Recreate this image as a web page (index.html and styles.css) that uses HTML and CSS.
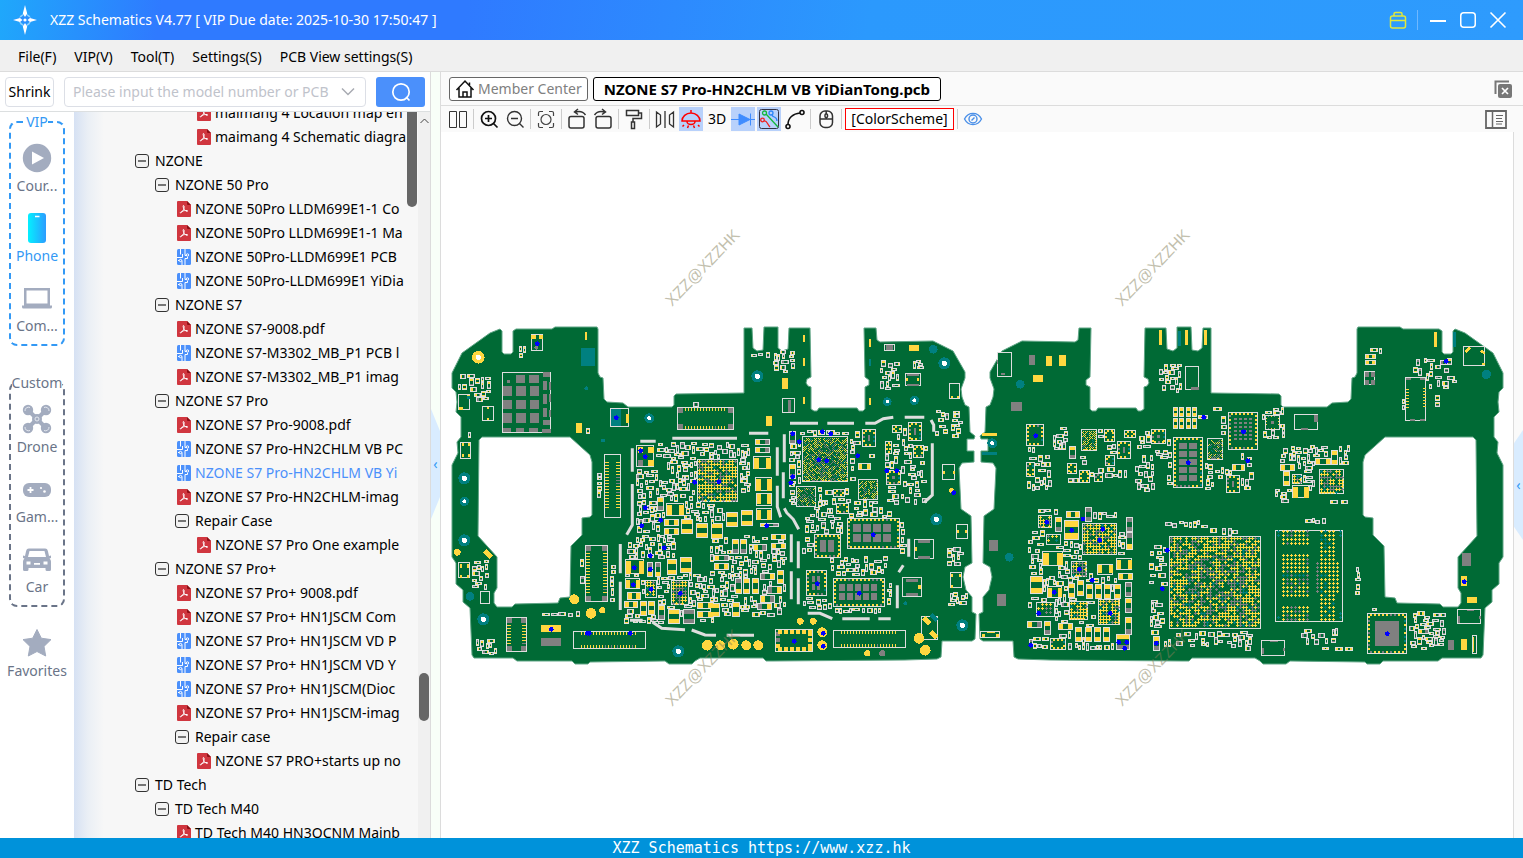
FILE: index.html
```html
<!DOCTYPE html>
<html lang="en">
<head>
    <meta charset="UTF-8">
    <meta name="viewport" content="width=device-width, initial-scale=1.0">
    <title>XZZ Schematics V4.77</title>
    <link rel="stylesheet" href="styles.css">
</head>
<body>
    <svg class="defs" aria-hidden="true">
        <symbol id="i-minus" viewBox="0 0 14 14"><rect x="0.5" y="0.5" width="13" height="13" rx="2.5" fill="#f2f2f2" stroke="#333"/><path d="M3 7h8" stroke="#222" stroke-width="1.2"/></symbol>
        <symbol id="i-pdf" viewBox="0 0 14 16"><path d="M1 0h9l4 4v11a1 1 0 0 1-1 1H1a1 1 0 0 1-1-1V1a1 1 0 0 1 1-1z" fill="#d0363f"/><path d="M10 0l4 4h-3a1 1 0 0 1-1-1z" fill="#8c1016"/><path d="M6.5 4.500c1 0 .6 2.500.1 3.800C5.900 10 4.600 11.800 3.500 12c-1-.6 2.500-2.800 6.500-2.500 1.500.4.300 1.400-.8.700C8 9.500 6.800 8 6.300 6.300 6.100 5.300 6 4.600 6.500 4.500z" fill="none" stroke="#fff"/></symbol>
        <symbol id="i-pcb" viewBox="0 0 14 16"><rect width="14" height="16" rx="1.500" fill="#4b90fb"/><path d="M3.500 0v5.500M0 8.500h5.500V5M8 16V9.500h2.500V8M5 16v-4.500H1M8 0v6.500h2.500" fill="none" stroke="#fff"/><g fill="#4b90fb" stroke="#fff"><circle cx="10.500" cy="6" r="1.200"/><circle cx="3.500" cy="11.500" r="1.200"/></g></symbol>
    </svg>

    <header class="titlebar">
        <svg class="logo" viewBox="0 0 28 32"><circle cx="14" cy="16" r="5.500" fill="none" stroke="#8fd0ff" stroke-width="1.500"/><path d="M14 1l1.800 11.500L27 16l-11.200 2.500L14 31l-1.800-12.500L1 16l11.200-3.500z" fill="#2a8fff"/><path d="M14 1l2.200 8.500L14 13l-2.200-3.500zM14 31l2.200-8.500L14 19l-2.200 3.500zM2 16l7-2 2.500 2L9 18zM26 16l-7-2-2.500 2 2.500 2z" fill="#fff"/><circle cx="14" cy="16" r="1.600" fill="#fff"/></svg>
        <h1>XZZ Schematics V4.77 [ VIP Due date: 2025-10-30 17:50:47 ]</h1>
        <div class="window-buttons">
            <button aria-label="Toolbox"><svg width="18" height="18" fill="none" stroke="#e1e83c" stroke-width="1.500"><rect x="1.500" y="5" width="15" height="12" rx="2"/><path d="M5 5V3a1.500 1.500 0 0 1 1.500-1.500h5A1.500 1.500 0 0 1 13 3v2M1.500 9.500h15M5.500 9.500h7"/></svg></button>
            <span class="divider"></span>
            <button aria-label="Minimize"><svg width="18" height="18" stroke="#fff" stroke-width="2"><path d="M1 10h16"/></svg></button>
            <button aria-label="Maximize"><svg width="18" height="18" fill="none" stroke="#fff" stroke-width="1.500"><rect x="1.750" y="1.750" width="14.500" height="14.500" rx="3"/></svg></button>
            <button aria-label="Close"><svg width="18" height="18" stroke="#fff" stroke-width="1.600"><path d="M1.500 1.500l15 15M16.500 1.500l-15 15"/></svg></button>
        </div>
    </header>

    <nav class="menubar">
        <button>File(F)</button>
        <button>VIP(V)</button>
        <button>Tool(T)</button>
        <button>Settings(S)</button>
        <button>PCB View settings(S)</button>
    </nav>

    <main class="main">
        <aside class="left">
            <form class="search">
                <button type="button" class="shrink">Shrink</button>
                <div class="search-box">
                    <input type="text" aria-label="Model number or PCB" placeholder="Please input the model number or PCB">
                    <svg width="14" height="10" fill="none" stroke="#a8abb2" stroke-width="1.500"><path d="M1 1.500l6 6 6-6"/></svg>
                </div>
                <button type="button" class="search-button" aria-label="Search"><svg width="20" height="20" fill="none" stroke="#fff" stroke-width="1.700"><circle cx="10" cy="10" r="8.200"/><path d="M15 15l3.500 3.500"/></svg></button>
            </form>
            <div class="left-body">
                <nav class="side">
                    <fieldset class="group vip">
                        <legend>VIP</legend>
                        <button class="side-item"><svg viewBox="0 0 32 32"><circle cx="16" cy="16" r="14.200"/><path d="M11 9.500l12 6.500-12 6.500z" fill="#fff"/></svg>Cour...</button>
                        <button class="side-item active"><svg viewBox="0 0 32 32"><defs><linearGradient id="ph"><stop offset="0" stop-color="#04f0ff"/><stop offset="1" stop-color="#2c9cff"/></linearGradient></defs><rect x="7" y="1" width="18" height="30" rx="3" fill="url(#ph)"/><path d="M14 4.500h4.500" stroke="#fff" stroke-width="1.500"/></svg>Phone</button>
                        <button class="side-item"><svg viewBox="0 0 32 32"><path d="M3 6h26v18H3zM5.500 8.500v13h21v-13z" fill-rule="evenodd"/><path d="M1 23.500h30V25a1.500 1.500 0 0 1-1.500 1.500h-27A1.500 1.500 0 0 1 1 25z"/></svg>Com...</button>
                    </fieldset>
                    <fieldset class="group custom">
                        <legend>Custom</legend>
                        <button class="side-item"><svg viewBox="0 0 32 32"><path d="M7 7l18 18M25 7L7 25" stroke="#a3acbf" stroke-width="4"/><circle cx="16" cy="16" r="5"/><circle cx="7" cy="7" r="5.200"/><circle cx="25" cy="7" r="5.200"/><circle cx="7" cy="25" r="5.200"/><circle cx="25" cy="25" r="5.200"/><g fill="none" stroke="#e4e8f0"><path d="M4 8a3.500 3.500 0 0 1 5-3.500M28 8a3.500 3.500 0 0 0-5-3.500M4 24a3.500 3.500 0 0 0 5 3.500M28 24a3.500 3.500 0 0 1-5 3.500"/><circle cx="16" cy="16" r="2"/></g></svg>Drone</button>
                        <button class="side-item"><svg viewBox="0 0 32 32"><rect x="2" y="10" width="28" height="14" rx="6"/><path d="M6.500 17h6M9.500 14v6" stroke="#fff" stroke-width="1.800"/><circle cx="20" cy="15" r="1.100" fill="#fff"/><circle cx="23.500" cy="18.500" r="1.300" fill="#fff"/></svg>Gam...</button>
                        <button class="side-item"><svg viewBox="0 0 32 32"><path d="M8 5.500h16c2 0 2.500 1 3 3l1 4.500 2-.5v2.500l-1.500.5c1 .8 1.500 2 1.500 3.500v7.500a1.500 1.500 0 0 1-1.500 1.500H26a1.500 1.500 0 0 1-1.500-1.500V25h-17v1.500A1.500 1.500 0 0 1 6 28H3.500A1.500 1.500 0 0 1 2 26.500V19c0-1.500.5-2.700 1.500-3.500L2 15v-2.500l2 .5 1-4.500c.5-2 1-3 3-3z"/><path d="M8.500 8h15L25 14H7zM5.500 18.500h4v3h-4zM13 20h6v1.800h-6zM22.500 18.500h4v3h-4z" fill="#fff"/></svg>Car</button>
                    </fieldset>
                    <button class="side-item favorites"><svg viewBox="0 0 32 32"><path d="M16 2.500l4.300 8.700 9.700 1.400-7 6.800 1.700 9.600-8.700-4.500L7.300 29 9 19.400l-7-6.800 9.700-1.400z" stroke="#a3acbf" stroke-linejoin="round"/></svg>Favorites</button>
                </nav>
                <ul class="tree">
                    <li class="file l3"><svg><use href="#i-pdf"/></svg>maimang 4 Location map en</li>
                    <li class="file l3"><svg><use href="#i-pdf"/></svg>maimang 4 Schematic diagra</li>
                    <li class="folder l0"><svg><use href="#i-minus"/></svg>NZONE</li>
                    <li class="folder l1"><svg><use href="#i-minus"/></svg>NZONE 50 Pro</li>
                    <li class="file l2"><svg><use href="#i-pdf"/></svg>NZONE 50Pro LLDM699E1-1 Co</li>
                    <li class="file l2"><svg><use href="#i-pdf"/></svg>NZONE 50Pro LLDM699E1-1 Ma</li>
                    <li class="file l2"><svg><use href="#i-pcb"/></svg>NZONE 50Pro-LLDM699E1 PCB</li>
                    <li class="file l2"><svg><use href="#i-pcb"/></svg>NZONE 50Pro-LLDM699E1 YiDia</li>
                    <li class="folder l1"><svg><use href="#i-minus"/></svg>NZONE S7</li>
                    <li class="file l2"><svg><use href="#i-pdf"/></svg>NZONE S7-9008.pdf</li>
                    <li class="file l2"><svg><use href="#i-pcb"/></svg>NZONE S7-M3302_MB_P1 PCB l</li>
                    <li class="file l2"><svg><use href="#i-pdf"/></svg>NZONE S7-M3302_MB_P1 imag</li>
                    <li class="folder l1"><svg><use href="#i-minus"/></svg>NZONE S7 Pro</li>
                    <li class="file l2"><svg><use href="#i-pdf"/></svg>NZONE S7 Pro-9008.pdf</li>
                    <li class="file l2"><svg><use href="#i-pcb"/></svg>NZONE S7 Pro-HN2CHLM VB PC</li>
                    <li class="file l2 selected"><svg><use href="#i-pcb"/></svg>NZONE S7 Pro-HN2CHLM VB Yi</li>
                    <li class="file l2"><svg><use href="#i-pdf"/></svg>NZONE S7 Pro-HN2CHLM-imag</li>
                    <li class="folder l2"><svg><use href="#i-minus"/></svg>Repair Case</li>
                    <li class="file l3"><svg><use href="#i-pdf"/></svg>NZONE S7 Pro One example</li>
                    <li class="folder l1"><svg><use href="#i-minus"/></svg>NZONE S7 Pro+</li>
                    <li class="file l2"><svg><use href="#i-pdf"/></svg>NZONE S7 Pro+ 9008.pdf</li>
                    <li class="file l2"><svg><use href="#i-pdf"/></svg>NZONE S7 Pro+ HN1JSCM Com</li>
                    <li class="file l2"><svg><use href="#i-pcb"/></svg>NZONE S7 Pro+ HN1JSCM VD P</li>
                    <li class="file l2"><svg><use href="#i-pcb"/></svg>NZONE S7 Pro+ HN1JSCM VD Y</li>
                    <li class="file l2"><svg><use href="#i-pcb"/></svg>NZONE S7 Pro+ HN1JSCM(Dioc</li>
                    <li class="file l2"><svg><use href="#i-pdf"/></svg>NZONE S7 Pro+ HN1JSCM-imag</li>
                    <li class="folder l2"><svg><use href="#i-minus"/></svg>Repair case</li>
                    <li class="file l3"><svg><use href="#i-pdf"/></svg>NZONE S7 PRO+starts up no</li>
                    <li class="folder l0"><svg><use href="#i-minus"/></svg>TD Tech</li>
                    <li class="folder l1"><svg><use href="#i-minus"/></svg>TD Tech M40</li>
                    <li class="file l2"><svg><use href="#i-pdf"/></svg>TD Tech M40 HN3OCNM Mainb</li>
                </ul>
                <div class="scroll inner"><span class="thumb"></span></div>
                <div class="scroll outer"><svg width="9" height="6" fill="none" stroke="#444"><path d="M0.500 5l4-4 4 4"/></svg><span class="thumb"></span></div>
            </div>
        </aside>

        <div class="splitter"><button class="notch" aria-label="Collapse list">&lsaquo;</button></div>

        <section class="viewer">
            <div class="tabs">
                <button class="tab"><svg width="20" height="20" fill="none" stroke="#111" stroke-width="1.500"><path d="M1.500 11L10 2l8.500 9M4 9v9h12V9M8 18v-5h4v5M14.500 3.500v2.500"/></svg>Member Center</button>
                <button class="tab current">NZONE S7 Pro-HN2CHLM VB YiDianTong.pcb</button>
                <button class="close-all" aria-label="Close all tabs"><svg width="20" height="20"><path d="M2.500 15V2.500H16" fill="none" stroke="#777" stroke-width="2"/><rect x="5" y="5" width="14" height="14" rx="2" fill="#777"/><path d="M9 9l6 6M15 9l-6 6" stroke="#fff" stroke-width="1.700"/></svg></button>
            </div>
            <div class="toolbar">
                <button aria-label="Split view"><svg viewBox="0 0 24 24" stroke="#333"><path d="M3.500 4.500h7v16h-7zM13.500 4.500h7v16h-7z"/></svg></button>
                <span class="sep"></span>
                <button aria-label="Zoom in"><svg viewBox="0 0 24 24" stroke="#111" stroke-width="1.700"><circle cx="11.500" cy="11.500" r="7"/><path d="M16.500 16.500l4 4M8 11.500h7M11.500 8v7"/></svg></button>
                <button aria-label="Zoom out"><svg viewBox="0 0 24 24" stroke="#333" stroke-width="1.400"><circle cx="11.500" cy="11.500" r="7"/><path d="M16.500 16.500l4 4M8 11.500h7"/></svg></button>
                <span class="sep"></span>
                <button aria-label="Fit"><svg viewBox="0 0 24 24" stroke="#444" stroke-width="1.200"><circle cx="12" cy="12.500" r="5"/><path d="M4.500 9V6a1.500 1.500 0 0 1 1.500-1.500h3M15 4.500h3A1.500 1.500 0 0 1 19.500 6v3M19.500 16v3a1.500 1.500 0 0 1-1.500 1.500h-3M9 20.500H6A1.500 1.500 0 0 1 4.500 19v-3"/></svg></button>
                <span class="sep"></span>
                <button aria-label="Rotate left"><svg viewBox="0 0 24 24" stroke="#333" stroke-width="1.500"><rect x="4" y="9.500" width="15" height="11.500" rx="2"/><path d="M20.500 8c-2-3-6-4-10-3M13 2l-3.500 3L13 7.500"/></svg></button>
                <button aria-label="Rotate right"><svg viewBox="0 0 24 24" stroke="#333" stroke-width="1.500"><rect x="5" y="9.500" width="15" height="11.500" rx="2"/><path d="M3.500 8c2-3 6-4 10-3M11 2l3.500 3L11 7.500"/></svg></button>
                <span class="sep"></span>
                <button aria-label="Paint"><svg viewBox="0 0 24 24" stroke="#333" stroke-width="1.500"><path d="M4.500 3.500h12v5h-12zM16.500 6h3v5.500H11V15M9.500 15h3v6.500h-3z"/></svg></button>
                <span class="sep"></span>
                <button aria-label="Mirror"><svg viewBox="0 0 24 24" stroke="#333" stroke-width="1.300"><path d="M12 4v17M3.500 5v15l4-3V8zM20.500 5v15l-4-3V8z"/></svg></button>
                <button class="on" aria-label="Lamp"><svg viewBox="0 0 24 24" stroke="#f00" stroke-width="1.500"><path d="M12 3v3M3 14a9 8 0 0 1 18 0zM8 14.500a4 3 0 0 0 8 0M5 18l-1.500 1.500M19 18l1.500 1.500M9.500 18.500l-1 2.500M14.500 18.500l1 2.500"/></svg></button>
                <button>3D</button>
                <button class="on" aria-label="Diode"><svg viewBox="0 0 24 24" stroke="#3f8cff"><path d="M0 12.500h24M19.500 6.500v12"/><path d="M8 7l11 5.500L8 18z" fill="#3f8cff"/></svg></button>
                <button class="on" aria-label="Nets"><svg viewBox="0 0 24 24"><rect x="2.500" y="2.500" width="19" height="19" rx="2" stroke="#334"/><g stroke-width="1.300"><path d="M9 7l12 13" stroke="#12b83c"/><circle cx="7.500" cy="6" r="2" stroke="#12b83c"/><path d="M15 8c1 3 5 1 5 6" stroke="#2d86f8"/><circle cx="14" cy="6" r="2" stroke="#2d86f8"/><path d="M7 14c3-1 3 3 6 6" stroke="#f02020"/><circle cx="5.500" cy="13" r="1.800" stroke="#f02020"/></g></svg></button>
                <button aria-label="Trace"><svg viewBox="0 0 24 24" stroke="#111" stroke-width="1.600"><circle cx="5" cy="19.500" r="2"/><circle cx="19" cy="5.500" r="2"/><path d="M5 17.500C5 11 10 6.500 17 6"/></svg></button>
                <span class="sep"></span>
                <button aria-label="Mouse"><svg viewBox="0 0 24 24" stroke="#333" stroke-width="1.500"><rect x="6" y="4" width="12.500" height="16.500" rx="5"/><path d="M6 12h12.500M12.200 4v3M12.200 10.500V12"/><rect x="11" y="7" width="2.500" height="3.500" rx="1"/></svg></button>
                <span class="sep"></span>
                <button class="scheme">[ColorScheme]</button>
                <span class="sep"></span>
                <button aria-label="Show"><svg viewBox="0 0 24 24" stroke="#4b90e8" stroke-width="1.400"><path d="M3.500 12c4-7.500 13-7.500 17 0-4 7.500-13 7.500-17 0z"/><circle cx="12" cy="12" r="4"/><path d="M10.500 13.500l3-3"/></svg></button>
                <button class="panel-button" aria-label="Side panel"><svg viewBox="0 0 24 24" stroke="#666"><path d="M2 4h20v17H2z" stroke-width="1.800"/><path d="M8.500 4v17" stroke-width="1.500"/><path d="M12 8.500h7M12 11.500h6M12 14.500h7M12 17h6"/></svg></button>
            </div>
            <div class="stage">
                <svg class="board" id="board" viewBox="441 132 1072 706"></svg>
                <div class="edge"><button class="notch" aria-label="Open panel">&lsaquo;</button></div>
            </div>
        </section>
    </main>

    <footer class="statusbar">XZZ Schematics https://www.xzz.hk</footer>
    <script src="board.js"></script>
</body>
</html>
```

FILE: styles.css
```css
* { box-sizing: border-box; }
body { margin: 0; height: 100vh; display: flex; flex-direction: column; overflow: hidden; font-family: "Noto Sans", "Open Sans", sans-serif; font-size: 14px; line-height: 20px; color: #000; background: #fff; }
button { font: inherit; color: inherit; background: none; border: none; padding: 0; margin: 0; cursor: pointer; }
svg { display: block; flex: none; }
.defs { position: absolute; width: 0; height: 0; }

.titlebar { display: flex; align-items: center; height: 40px; flex: none; padding: 0 16px 0 11px; color: #fff; background: linear-gradient(100deg, #1fa8fb 0, #2f7aff 160px, #2f7aff 460px, #2b99fd 860px, #2e9bfd 100%); }
.titlebar h1 { flex: 1; margin: 0 0 0 11px; font-size: 14px; font-weight: 400; white-space: nowrap; }
.logo { width: 28px; height: 32px; }
.window-buttons { display: flex; align-items: center; gap: 12px; }
.window-buttons .divider { width: 1px; height: 20px; margin-right: -1px; margin-left: -2px; background: #6fb8ff; }

.menubar { display: flex; gap: 18px; height: 32px; flex: none; padding: 2px 18px 0; background: #f0f0f0; border-bottom: 1px solid #dcdcdc; }

.main { flex: 1; display: flex; min-height: 0; }
.left { width: 431px; flex: none; display: flex; flex-direction: column; border-right: 1px solid #dcdcdc; }
.search { display: flex; gap: 10px; height: 40px; flex: none; padding: 5px; border-bottom: 1px solid #dcdfe0; }
.search .shrink { width: 49px; height: 30px; border: 1px solid #dcdfe6; border-radius: 4px; }
.search-box { flex: 1; display: flex; align-items: center; height: 30px; padding: 0 10px 0 8px; gap: 8px; border: 1px solid #dcdfe6; border-radius: 4px; }
.search-box input { flex: 1; min-width: 0; border: none; outline: none; padding: 0; font: inherit; background: none; }
.search-box input::placeholder { color: #bfc3cb; }
.search-button { display: flex; align-items: center; justify-content: center; width: 49px; height: 30px; background: #4b90fb; border-radius: 3px; }

.left-body { flex: 1; display: flex; min-height: 0; }
.side { width: 74px; flex: none; display: flex; flex-direction: column; background: #fff; color: #6a7488; }
.group { min-width: 0; margin: 0 9px 27px; padding: 2px 0 0; border: 2px dashed #6a7488; border-radius: 8px; }
.group legend { margin: 0 auto; padding: 0; line-height: 20px; }
.group.vip { border-color: #3399f5; }
.group.vip legend { color: #3399f5; }
.group.custom { margin-bottom: 12px; }
.side-item { display: flex; flex-direction: column; align-items: center; gap: 2px; width: 100%; height: 70px; padding: 8px 0; white-space: nowrap; }
.side-item svg { width: 32px; height: 32px; fill: #a3acbf; }
.side-item.active { color: #3399f5; }

.tree { flex: 1; min-width: 0; overflow: hidden; margin: 0; padding: 0; list-style: none; display: flex; flex-direction: column; background: linear-gradient(90deg, #d6e1f3 0, #eaeff5 14px, #f7f7f7 30px, #f7f7f7 100%); }
.tree li { display: flex; align-items: center; height: 24px; flex: none; overflow: hidden; white-space: nowrap; }
.tree li:first-child { margin-top: -11px; }
.folder svg { width: 14px; height: 14px; margin-right: 6px; }
.file svg { width: 14px; height: 16px; margin: 0 4px 0 2px; }
.l0 { padding-left: 61px; }
.l1 { padding-left: 81px; }
.l2 { padding-left: 101px; }
.l3 { padding-left: 121px; }
.tree .selected { color: #4b90fb; }
.scroll { flex: none; display: flex; flex-direction: column; align-items: center; }
.scroll .thumb { width: 10px; background: #666; border-radius: 5px; }
.scroll.inner { width: 12px; background: #f7f7f7; }
.scroll.inner .thumb { height: 95px; border-radius: 0 0 5px 5px; }
.scroll.outer { width: 12px; padding: 6px 0 117px; justify-content: space-between; background: #f0f0f0; }
.scroll.outer .thumb { height: 48px; }

.splitter { width: 10px; flex: none; display: flex; align-items: center; padding-top: 18px; background: #f8fff8; border-right: 1px solid #dcdcdc; }
.notch { width: 10px; height: 110px; color: #3399f5; background: #d9ecff; clip-path: polygon(0 0, 100% 20%, 100% 80%, 0 100%); }

.viewer { flex: 1; min-width: 0; display: flex; flex-direction: column; }
.tabs { display: flex; align-items: center; gap: 5px; height: 34px; flex: none; padding: 0 10px 0 8px; background: #fafafa; border-bottom: 1px solid #dcdcdc; }
.tab { display: flex; align-items: center; gap: 3px; height: 24px; padding: 0 5px; color: #808080; border: 1px solid #666; border-radius: 3px; background: #fff; white-space: nowrap; }
.tab.current { padding: 0 10px; color: #000; font-size: 15px; font-weight: 700; border-color: #000; }
.close-all { margin-left: auto; }
.toolbar { display: flex; align-items: center; gap: 2px; height: 26px; flex: none; padding: 0 5px; background: #fafafa; }
.toolbar button { width: 24px; height: 24px; }
.toolbar svg { width: 24px; height: 24px; fill: none; }
.toolbar .on { background: #b8d1fb; }
.toolbar .sep { width: 1px; height: 20px; margin: 0 1px; background: #ccc; }
.toolbar .scheme { width: 109px; height: 22px; border: 1px solid #f00; background: #fff; }
.toolbar .panel-button { margin-left: auto; margin-right: 10px; }

.stage { flex: 1; min-height: 0; display: flex; }
.board { flex: 1; min-width: 0; height: 100%; }
.watermark { font-family: "Liberation Sans", sans-serif; font-size: 16px; fill: #857f5c; fill-opacity: 0.5; }
.edge { width: 10px; flex: none; display: flex; align-items: center; background: #fafafa; border-left: 1px solid #dcdcdc; }
.edge .notch { clip-path: polygon(0 12%, 100% 0, 100% 100%, 0 88%); }

.statusbar { height: 20px; flex: none; text-align: center; color: #fff; background: #0092da; font-family: "DejaVu Sans Mono", monospace; font-size: 15px; }
```

FILE: board.js
```js
// Board viewer: outline in view units, parts in 1/3 units per section.
const OUTLINE = '502,331 502,352 504,354 511,354 513,352 513,331 516,329 552,329 555,327 597,327 598,329 598,373 600,377 603,378 604,399 607,402 623,403 628,407 672,407 674,405 674,396 676,394 744,393 744,328 752,328 753,348 757,351 763,350 764,327 778,327 778,348 782,351 788,349 789,328 810,328 811,377 807,379 806,383 808,386 811,387 811,409 814,411 817,411 819,408 857,408 859,411 863,411 865,409 865,387 869,385 869,380 865,377 864,328 876,328 877,340 880,342 933,341 953,351 965,372 965,378 961,389 962,397 965,405 969,407 970,432 975,436 974,439 967,439 967,451 974,451 974,462 962,463 959,468 961,509 971,516 972,563 965,567 963,577 966,590 972,597 972,612 976,614 975,639 972,641 942,641 941,657 937,659 905,660 773,661 766,661 763,658 700,658 695,661 692,664 669,664 665,661 590,662 588,664 575,664 572,661 517,661 513,658 474,658 472,655 470,608 463,602 463,590 456,584 456,563 452,557 452,465 458,453 457,442 461,437 461,417 456,412 457,402 456,392 452,388 452,373 462,353 490,333 500,329';
const HOLE = '479,440 482,437 570,437 590,455 592,462 592,515 590,517 582,518 582,535 571,546 570,597 560,598 558,603 515,604 512,607 497,607 494,603 494,593 497,588 497,557 478,536';

const ORDER = ['#dedede', '#006a35', '#808080', '#ffd740', '#008080', '#0000ff', '#ffffff'];
const [LINE, GREEN, GRAY, GOLD, TEAL, BLUE, WHITE] = ORDER;
const paint = {};
ORDER.forEach(c => paint[c] = '');
let lines = '';
let taken = [];
let ox = 0;

let seed = 77;
function rnd() {
    seed = (seed + 0x6D2B79F5) | 0;
    let t = Math.imul(seed ^ (seed >>> 15), 1 | seed);
    t = (t + Math.imul(t ^ (t >>> 7), 61 | t)) ^ t;
    return ((t ^ (t >>> 14)) >>> 0) / 4294967296;
}
function u(v) { return Math.round(v / 3); }
function px(c, x, y, w, h) { paint[c] += `M${x} ${y}h${w}v${h}h${-w}z`; }
function rect(c, x, y, w, h) { px(c, 445 + u(ox + x), 310 + u(y), Math.max(1, u(w)), Math.max(1, u(h))); }
function dot(c, x, y, r) {
    const X = 445 + (ox + x) / 3, Y = 310 + y / 3, R = r / 3;
    paint[c] += `M${X - R} ${Y}a${R} ${R} 0 1 1 ${2 * R} 0a${R} ${R} 0 1 1 ${-2 * R} 0z`;
}
function frame(x, y, w, h) {
    px(LINE, x, y, w, h);
    px(GREEN, x + 1, y + 1, w - 2, h - 2);
}
function box(x, y, w, h) {
    const X = 445 + u(ox + x), Y = 310 + u(y);
    frame(X, Y, u(w), u(h));
    taken.push([X, Y, u(w), u(h)]);
    return [X, Y, u(w), u(h)];
}
// two-terminal part with end pads
function chip(x, y, w, h, c) {
    const [X, Y, W, H] = box(x, y, w, h);
    const a = c || (rnd() < .75 ? GOLD : GRAY), b = c || (rnd() < .6 ? GOLD : GRAY);
    if (W >= H) {
        const p = Math.floor(W * .3);
        px(a, X + 1, Y + 1, p, H - 2); px(b, X + W - 1 - p, Y + 1, p, H - 2);
    } else {
        const p = Math.floor(H * .3);
        px(a, X + 1, Y + 1, W - 2, p); px(b, X + 1, Y + H - 1 - p, W - 2, p);
    }
}
// wide inductors have their pads left and right
function coil(x, y, w, h) { box(x, y, w, h); rect(GOLD, x + 3, y + 4, w * .27, h - 8); rect(GOLD, x + w * .7, y + 4, w * .27, h - 8); }
// package with edge pads and an optional thermal grid
function ic(x, y, w, h, cols, rows, pad) {
    const [X, Y, W, H] = box(x, y, w, h);
    const s = pad || 2;
    for (let i = 3; i < W - 3; i += s + 2) { px(rnd() < .8 ? GOLD : GRAY, X + i, Y + 1, s, s); px(rnd() < .8 ? GOLD : GRAY, X + i, Y + H - 1 - s, s, s); }
    for (let i = 3; i < H - 3; i += s + 2) { px(rnd() < .8 ? GOLD : GRAY, X + 1, Y + i, s, s); px(rnd() < .8 ? GOLD : TEAL, X + W - 1 - s, Y + i, s, s); }
    if (!cols) return;
    const cw = Math.floor((W - 10) / cols), ch = Math.floor((H - 10) / rows);
    for (let i = 0; i < cols; i++) for (let j = 0; j < rows; j++) px(GRAY, X + 6 + i * cw, Y + 6 + j * ch, Math.max(2, cw - 2), Math.max(2, ch - 2));
}
function connector(x, y, w, h, corner) {
    const [X, Y, W, H] = box(x, y, w, h);
    const k = corner ? 5 : 0;
    if (k) [[1, 1], [W - 6, 1], [1, H - 6], [W - 6, H - 6]].forEach(p => px(GRAY, X + p[0], Y + p[1], 5, 5));
    if (W > H) for (let i = 8; i < W - 8; i += 3) { px(GOLD, X + i, Y + 1, 1, 3); px(rnd() < .8 ? GOLD : GRAY, X + i, Y + H - 4, 1, 3); }
    else for (let i = 8; i < H - 8; i += 3) { px(GOLD, X + 1, Y + i, 4, 1); px(rnd() < .7 ? GOLD : GRAY, X + W - 5, Y + i, 4, 1); }
}
function ball(c, x, y) { px(c, x - 1, y, 3, 1); px(c, x, y - 1, 1, 3); }
// step 2 is a checkerboard of single pads, larger steps are crosses
function bga(x, y, w, h, step, gray, fill) {
    const [X, Y, W, H] = box(x, y, w, h);
    for (let j = 2; j < H - 1; j += step) for (let i = 2; i < W - 1; i += step) {
        if (rnd() > (fill || .92)) continue;
        const mid = Math.hypot((i - W / 2) / W, (j - H / 2) / H) < .33;
        const t = rnd();
        const c = t < (mid ? gray * 2 : gray) ? GRAY : t > .95 ? TEAL : GOLD;
        if (step === 2) { px(c, X + i, Y + j, 1, 1); px(c, X + i + (rnd() < .5 ? 1 : -1), Y + j + 1 < Y + H - 1 ? Y + j + 1 : Y + j, 1, 1); }
        else ball(c, X + i, Y + j);
    }
}
// dense area of small passives
function field(x, y, w, h, density) {
    const X0 = 445 + u(ox + x), Y0 = 310 + u(y), X1 = X0 + u(w), Y1 = Y0 + u(h);
    const tries = (X1 - X0) * (Y1 - Y0) / 4;
    for (let n = 0; n < tries * (density || 1); n++) {
        let a = 5 + Math.floor(rnd() * 4), b = 3 + Math.floor(rnd() * 2.600);
        if (rnd() < .5) [a, b] = [b, a];
        const X = X0 + Math.floor(rnd() * (X1 - X0 - a + 1)), Y = Y0 + Math.floor(rnd() * (Y1 - Y0 - b + 1));
        if (X < X0 || Y < Y0) continue;
        if (taken.some(t => X < t[0] + t[2] && X + a > t[0] && Y < t[1] + t[3] && Y + b > t[1])) continue;
        taken.push([X, Y, a, b]);
        frame(X, Y, a, b);
        const c1 = rnd() < .65 ? GOLD : GRAY, c2 = rnd() < .5 ? GOLD : GRAY;
        if (a > b) { px(c1, X + 1, Y + 1, a > 6 ? 2 : 1, b - 2); px(c2, X + a - 2, Y + 1, 1, b - 2); }
        else { px(c1, X + 1, Y + 1, a - 2, b > 6 ? 2 : 1); px(c2, X + 1, Y + b - 2, a - 2, 1); }
    }
}
function each(fn, list) { list.forEach(a => fn(...a)); }
function fill(c, list) { list.forEach(a => rect(c, ...a)); }
function dots(c, list, r) { list.forEach(a => dot(c, a[0], a[1], a[2] || r)); }
function drill(list) { list.forEach(a => { dot(a[3] || TEAL, a[0], a[1], a[2]); dot(WHITE, a[0], a[1], a[2] * .42); }); }
function bars(list) {
    list.forEach(a => {
        let d = '';
        for (let i = 0; i < a.length; i += 2) d += (i ? 'L' : 'M') + (445 + (ox + a[i]) / 3).toFixed(1) + ' ' + (310 + a[i + 1] / 3).toFixed(1);
        lines += d;
    });
}

// section 1
ox = 0;
box(172, 187, 148, 184);
fill(GRAY, [[186,210,9,9],[213,195,27,24],[252,195,30,24],[294,187,21,14],[294,213,12,27],[312,216,6,24],[174,228,27,30],[213,228,30,30],[255,228,27,30],[294,252,12,30],[312,252,6,24],[174,270,27,27],[213,270,30,27],[255,270,27,27],[294,294,12,27],[312,300,6,21],[174,309,27,30],[213,309,30,30],[255,309,27,30],[294,330,21,14],[174,354,24,12],[213,354,24,12],[252,354,27,12],[291,357,27,12]]);
each(box, [[259,73,37,52],[496,295,57,57],[40,253,36,48],[112,287,37,45],[46,395,34,50],[40,757,36,48],[106,844,30,39],[574,406,54,66]]);
fill(GOLD, [[420,66,6,24],[393,339,18,30],[259,75,14,12],[282,75,12,12],[543,312,9,26],[42,290,12,9],[66,256,8,9],[125,290,6,6],[125,324,6,6],[50,398,6,9],[70,398,6,9],[50,432,6,9],[70,432,6,9],[44,762,6,12],[66,762,6,12],[44,794,6,9],[66,794,6,9],[578,410,15,18],[608,410,17,18],[608,450,17,18],[288,945,60,20]]);
fill(GRAY, [[578,450,15,18],[288,984,60,24]]);
fill(TEAL, [[408,114,42,54],[468,387,12,9],[498,297,30,50],[66,258,8,8]]);
paint[GOLD] += 'M486 549l7 6-3 4-7-6z';
drill([[58,505,18],[58,691,18],[115,928,18],[700,1024,18],[613,325,15],[58,574,14],[100,142,19,GOLD]]);
dots(GOLD, [[388,868,15],[438,910,16],[472,901,9],[37,727,10],[787,1006,16]]);
dots(TEAL, [[75,859,13],[424,235,6]]);
dots(GRAY, [[274,113,6]]);
each(connector, [[478,433,52,192],[421,706,70,171,1],[184,922,64,105,1],[385,964,220,54],[697,292,171,69,1]]);
each(coil, [[663,580,54,39],[540,748,58,46],[540,805,46,33]]);
each(chip, [[709,628,36,45,GOLD],[754,640,36,45,GOLD],[667,748,30,48,GOLD],[706,742,36,48,GOLD],[669,898,36,45],[714,898,36,45,GRAY],[637,562,21,42],[656,627,45,20],[656,653,45,20],[547,846,43,24],[538,873,43,22],[585,873,20,44],[609,873,22,42],[640,884,20,44],[757,877,50,20],[757,902,50,20],[606,757,18,45],[630,757,18,45]]);
bga(757, 448, 123, 130, 3, .2);
bga(601, 810, 36, 54, 3, .2);
bga(678, 810, 54, 75, 3, .3);
dots(BLUE, [[277,101],[514,323],[319,958],[427,970],[433,970],[556,970],[601,440],[587,422],[749,517],[601,593],[647,631],[590,647],[658,713],[616,737],[568,773],[616,778],[565,824],[619,838],[706,850],[821,515]], 7);
bars([[586,394,632,394],[682,385,876,385],[562,415,562,485],[562,522,562,645,545,674],[526,702,526,790],[526,815,526,900],[555,931,593,931],[622,936,650,955,720,959],[740,960,780,975,813,976]]);
each(field, [[632,397,178,55],[665,450,90,70],[574,478,70,90],[640,500,115,75],[574,570,90,100],[650,574,160,80],[574,670,120,30],[537,695,155,50],[537,740,120,200],[640,790,170,150],[92,985,62,50],[285,903,124,18],[40,185,100,60,.6],[82,225,60,50],[82,750,55,90],[64,362,20,24],[221,102,22,42],[455,485,18,82],[495,755,17,120],[405,740,12,90],[420,352,22,22],[732,276,30,12]]);

// section 2
ox = 795;
fill(GOLD, [[278,75,7,21],[278,144,7,24],[278,262,7,21],[477,87,7,24],[477,264,7,21],[216,204,18,33],[168,318,18,30],[597,105,30,18]]);
fill(TEAL, [[477,147,7,20]]);
each(box, [[523,103,33,20],[584,190,47,39],[718,220,32,48],[697,463,39,48],[739,643,36,45],[613,688,60,60],[577,802,60,60],[721,787,36,48],[217,265,39,45],[634,919,51,72]]);
fill(GRAY, [[528,106,22,15],[590,193,36,5],[590,221,36,5],[624,691,36,9],[624,738,36,9],[589,806,36,9],[589,850,36,9],[234,269,9,36]]);
fill(GOLD, [[587,204,6,9],[622,204,6,9],[722,258,6,6],[742,258,6,6],[700,482,6,9],[728,482,6,9],[742,660,6,9],[766,660,6,9],[616,712,6,12],[624,824,10,12],[724,792,6,10],[748,792,6,10],[724,824,6,8]]);
paint[GOLD] += 'M925 616l6 6-3 4-6-6zM932 630l6 6-3 4-6-6z';
paint[TEAL] += 'M932 613l6 6-3 3-6-6z';
drill([[142,199,18],[703,160,18],[532,275,13],[613,271,14],[679,628,18],[757,946,18]]);
dots(TEAL, [[670,118,13],[586,880,6]]);
dots(GOLD, [[271,934,10],[310,934,10],[31,1006,15],[70,1003,16],[109,1006,15],[145,1006,15],[337,967,15],[337,1006,15],[627,985,16],[646,1021,16],[472,1030,9],[725,542,8]]);
dots(GRAY, [[517,1030,9]]);
connector(370, 961, 220, 54);
ic(196, 958, 114, 69, 0, 0, 4);
ic(411, 625, 158, 92, 4, 2);
ic(313, 673, 81, 73, 2, 1);
ic(289, 781, 63, 78, 2, 2);
ic(370, 805, 156, 88, 5, 2);
each(ic, [[457,357,42,55,1,1],[595,337,42,57,1,1],[610,406,33,39],[527,479,45,45,1,1],[377,579,40,33],[368,538,36,25],[525,394,21,38],[545,345,30,24]]);
bga(277, 378, 139, 137, 2, .3, .8);
bga(259, 528, 60, 63, 2, .35, .7);
bga(445, 508, 60, 63, 2, .2, .7);
each(coil, [[130,439,55,40],[136,502,51,43],[138,549,47,38],[138,595,47,37]]);
each(chip, [[94,601,37,48,GOLD],[49,607,37,46,GOLD],[4,640,37,48,GOLD],[135,388,45,18],[135,411,45,18],[183,673,44,18],[183,698,44,18],[65,688,20,44],[90,688,20,44],[130,703,42,20],[13,736,45,18],[13,760,45,20],[76,803,20,48],[100,803,20,48],[125,803,20,48],[150,790,45,22],[200,780,20,42],[170,827,45,23],[150,855,45,23],[140,880,45,22],[0,880,30,42],[66,875,24,45],[443,458,40,20],[150,640,58,12],[238,362,20,40,GRAY],[238,462,20,44]]);
dots(BLUE, [[248,371],[337,365],[362,371],[268,395],[326,449],[350,452],[443,437],[248,500],[242,518],[530,482],[560,482],[170,647],[490,674],[322,821],[448,850],[253,994],[340,970],[340,1009],[731,548]], 7);
bars([[240,340,324,340],[352,340,432,340],[466,340,495,340,520,326,550,322],[584,322,643,322],[663,330,671,345,671,365],[667,400,667,555,643,577],[117,370,175,370],[223,373,223,457],[202,412,202,497],[220,487,220,565],[202,527,202,590,212,622],[223,595,230,608,250,628,266,658],[244,673,244,757],[265,694,265,775],[244,784,244,868],[265,805,265,883],[596,686,596,740],[566,787,580,766],[562,826,562,895],[293,910,330,910,367,926],[397,926,479,926],[505,926,542,926],[50,976,132,976]]);
each(field, [[0,395,120,50],[88,440,35,110],[236,358,36,230],[270,360,150,16],[420,378,16,135],[430,350,25,60],[475,425,20,20],[525,345,130,240,.2],[300,590,250,34,.6],[285,620,120,50,.5],[275,680,35,50],[280,862,90,38],[360,735,180,65,.4],[530,820,20,70],[370,895,150,14],[570,630,18,110],[0,590,48,50],[0,672,230,248,.5],[510,150,60,90],[185,120,70,70],[115,125,70,15],[675,300,85,85,.5],[710,710,50,60],[713,845,60,45],[320,530,110,60,.4],[430,570,90,40,.6],[605,140,35,35]]);

// section 3
ox = 1590;
fill(GOLD, [[213,138,18,30],[252,135,21,33],[174,195,30,21],[552,60,9,45],[630,60,9,45],[687,60,9,45],[21,369,45,9]]);
fill(TEAL, [[609,63,9,45],[21,426,45,9]]);
fill(GRAY, [[162,135,18,30],[108,276,33,27],[42,690,27,33],[66,852,27,36]]);
drill([[52,400,15]]);
dots(TEAL, [[136,223,13],[103,742,13]]);
each(box, [[65,127,45,75],[631,169,43,72],[16,964,60,21]]);
fill(GRAY, [[78,190,12,6],[648,232,24,8],[66,150,4,12]]);
fill(GOLD, [[20,972,9,9],[64,972,9,9],[36,967,24,4]]);
ic(154, 343, 54, 66);
ic(594, 382, 90, 153, 2, 5);
ic(760, 307, 90, 114, 4, 6);
each(ic, [[528,358,45,45,1,1],[388,358,33,40],[427,394,43,54,1,1],[447,361,35,24],[754,496,43,54,1,1],[312,481,33,39],[226,985,48,36],[390,435,30,34],[275,458,30,32],[358,488,27,28],[152,455,26,45]]);
bga(318, 358, 48, 66, 2, .1, .9);
bga(697, 385, 48, 66, 2, .4, .7);
each(bga, [[190,615,42,40,3,.2],[214,673,46,34,4,.3],[321,640,104,96,3,.15],[289,754,48,48,3,.4],[183,877,58,45,4,.3],[283,874,57,57,3,.05],[370,868,66,78,3,.1],[582,679,275,280,3,.25,.8]]);
each(coil, [[202,724,64,45],[217,829,46,36],[367,762,48,32],[424,745,48,36]]);
each(chip, [[283,408,22,40],[268,631,46,60,GOLD],[166,799,39,54,GOLD],[430,790,45,20],[240,622,20,46],[273,604,43,22],[331,592,22,44],[452,622,20,45],[452,667,20,54],[449,817,20,45],[449,863,20,44],[449,922,20,54],[279,820,20,45],[306,810,20,48],[333,822,20,44,GOLD],[361,822,20,44,GOLD],[388,822,20,44,GOLD],[416,822,20,44],[300,952,20,44,GOLD],[329,952,20,44,GOLD],[358,952,20,44,GOLD],[385,952,20,44,GOLD],[208,934,20,42],[157,934,45,22],[250,940,45,20],[424,973,42,48],[534,979,20,45],[594,292,14,31,GOLD],[594,323,14,32,GOLD],[612,292,14,31,GOLD],[612,323,14,32,GOLD],[633,292,14,31,GOLD],[633,323,14,32,GOLD],[651,292,14,31,GOLD],[651,323,14,32,GOLD],[772,463,40,22],[715,292,28,13],[670,316,30,13]]);
dots(BLUE, [[182,377],[686,322],[640,458],[806,365],[215,637],[325,627],[290,661],[383,658],[374,691],[313,778],[352,811],[238,847],[191,910],[406,910],[431,997],[455,997],[449,1015],[167,1006],[577,721],[562,836],[544,1000]], 7);
each(field, [[235,350,45,70],[368,358,18,40],[395,398,30,40],[485,358,42,60,.6],[540,420,38,26],[576,385,15,150],[480,435,60,110,.4],[150,435,80,112,.5],[275,430,60,95,.2],[346,470,125,45,.2],[552,162,68,90],[190,597,62,16],[160,660,50,240,.5],[240,690,80,200],[160,790,280,100,.5],[240,870,130,150,.4],[157,975,70,46],[300,1000,120,20],[355,605,75,22],[430,660,20,80],[522,700,58,130,.3],[524,870,46,105],[560,988,26,30],[566,630,135,25,.2],[600,962,220,52,.3],[690,455,30,85],[715,470,60,45,.4],[738,318,16,60],[152,412,30,18],[218,338,16,10],[705,655,100,20,.3]]);

// section 4
ox = 2385;
fill(GOLD, [[582,66,9,45],[663,798,18,30],[681,861,30,18],[663,987,18,33]]);
fill(TEAL, [[639,66,9,45]]);
fill(GRAY, [[666,729,27,39],[624,990,18,30]]);
dots(TEAL, [[739,193,14]]);
each(box, [[670,109,67,60],[163,313,73,48],[64,991,73,48],[652,898,73,45],[697,976,16,57],[373,184,34,43],[496,202,64,132]]);
fill(GRAY, [[221,316,12,22],[184,355,20,5],[66,1014,6,18],[90,993,24,4],[130,1014,6,9],[654,918,6,22],[680,900,22,4],[716,918,7,9],[376,187,12,16],[393,187,12,16],[376,209,12,15],[393,209,12,15],[499,204,14,6],[540,204,14,6],[510,328,16,5],[540,328,14,5]]);
fill(GOLD, [[700,982,4,45],[726,160,8,6]]);
for (let i = 0; i < 7; i++) fill(GOLD, [[499, 238 + i * 9, 9, 3], [549, 234 + i * 9, 9, 3]]);
paint[GOLD] += 'M1464 351l5-4 2 1-5 5zM1479 351l3-1 3 3-1 1z';
ic(76, 316, 45, 45, 1, 1, 1);
ic(382, 910, 121, 123);
fill(GRAY, [[405, 933, 72, 75]]);
bga(238, 478, 75, 75, 3, .25);
bga(156, 492, 30, 30, 3, .3);
const mem = box(106, 661, 205, 276);
for (let j = 0; j < 23; j++) {
    const Y = mem[1] + 1 + j * 4;
    const open = j === 4 || j === 5 || j === 17 || j === 18;
    for (let i = 0; i < 7; i++) if (!open) ball(rnd() < .3 && i > 0 ? GRAY : j === 11 ? TEAL : GOLD, mem[0] + 8 + i * 4, Y);
    for (let i = 0; i < 4; i++) ball(rnd() < .12 ? TEAL : GOLD, mem[0] + 46 + i * 4, Y);
    if (j > 7 && j < 16) { ball(GOLD, mem[0] + 62, Y); ball(GRAY, mem[0] + 42, Y); }
}
[[3, 1], [3, 5], [65, 1], [65, 5], [3, 87], [65, 87], [65, 83]].forEach(p => ball(TEAL, mem[0] + p[0], mem[1] + p[1]));
coil(157, 526, 50, 40);
each(chip, [[121,461,45,20],[130,484,20,45],[225,443,47,20,GOLD],[273,420,20,45,GOLD],[376,132,33,14,GOLD],[376,150,33,14,GOLD],[285,1012,23,13,GOLD],[315,1012,23,13,GOLD],[246,1012,20,9],[533,958,32,15],[530,904,25,15]]);
dots(BLUE, [[10,365],[23,452],[619,154],[673,815],[442,971]], 7);
each(field, [[120,405,210,60,.7],[120,430,110,60,.5],[295,420,35,48],[100,535,56,45,.5],[190,470,36,90],[192,625,75,18],[345,745,16,120],[508,905,110,115,.7],[180,955,120,52,.2],[65,290,70,95,.5],[0,430,45,110,.2],[520,140,135,95,.2],[487,240,10,90],[585,250,12,45],[0,960,38,65,.4],[380,115,45,14],[268,570,62,12],[395,895,18,9]]);

// the second half is the first one flipped over
const board = document.getElementById('board');
const half = `<polygon points="${OUTLINE}" fill="${GREEN}" stroke="#5fa585" stroke-width="1"/><polygon points="${HOLE}" fill="#fff" stroke="#5fa585" stroke-width="1"/>`;
let out = half + `<g transform="translate(1955 0) scale(-1 1)">${half}</g>`;
out += '<g shape-rendering="crispEdges">';
ORDER.forEach(c => out += `<path fill="${c}" d="${paint[c]}"/>`);
out += '</g>';
out += `<path d="${lines}" fill="none" stroke="${LINE}" stroke-width="3"/>`;
[[672, 307], [1122, 307], [672, 707], [1122, 707]].forEach(p => out += `<text class="watermark" transform="translate(${p[0]} ${p[1]}) rotate(-46)">XZZ@XZZHK</text>`);
board.innerHTML = out;
```
